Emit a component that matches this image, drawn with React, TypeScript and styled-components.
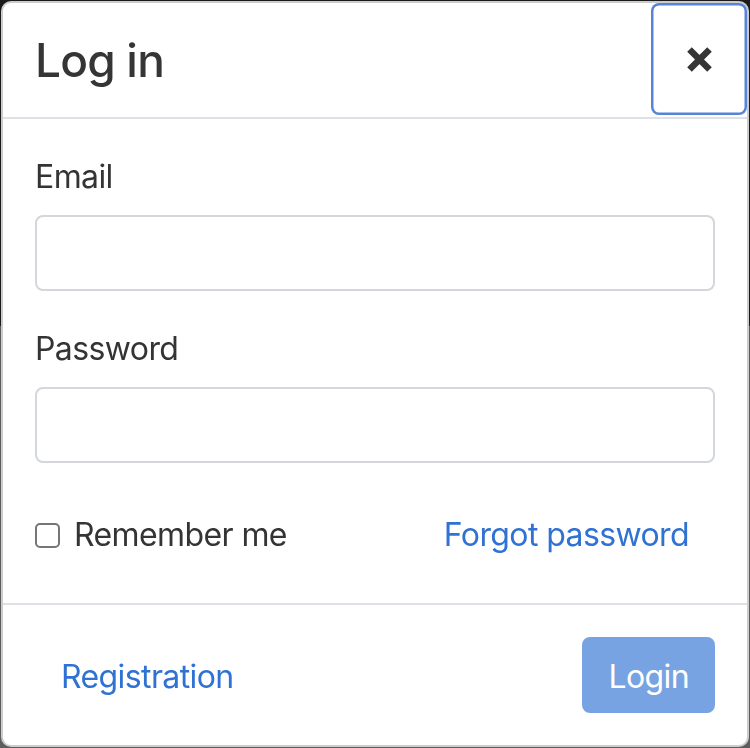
import React from "react"
import styled, { createGlobalStyle } from "styled-components"

const GlobalStyle = createGlobalStyle`
  * {
    box-sizing: border-box;
  }

  html,
  body {
    margin: 0;
    height: 100%;
  }

  body {
    font-family: Inter, "Noto Sans", sans-serif;
    background-color: #5d5d5d;
    color: #343434;
    overflow: hidden;
  }
`

const Page = styled.div`
  height: 748px;
  display: flex;
  flex-direction: column;
`

const Hero = styled.div`
  height: 326px;
  background-color: #1b1b1b;
`

const Backdrop = styled.div`
  flex: 1;
  background-color: #5d5d5d;
`

const Overlay = styled.div`
  position: fixed;
  inset: 0;
  padding: 1px;
  display: flex;
  justify-content: center;
  align-items: flex-start;
`

const Modal = styled.div`
  width: 748px;
  background-color: white;
  border: 2px solid rgba(0, 0, 0, 0.2);
  border-radius: 10px;
  display: flex;
  flex-direction: column;
`

const Header = styled.header`
  display: flex;
  align-items: flex-start;
  padding: 32px;
  border-bottom: 2px solid #dee2e6;
`

const Title = styled.h1`
  margin: 0;
  font-size: 46px;
  line-height: 50px;
  font-weight: 500;
  letter-spacing: -0.8px;
  color: #353535;
`

const CloseButton = styled.button`
  margin: -32px -32px -32px auto;
  width: 96px;
  height: 112px;
  padding: 0;
  display: flex;
  align-items: center;
  justify-content: center;
  background: none;
  border: 0;
  border-radius: 8px;
  box-shadow: inset 0 0 0 2.5px #5784d6;
  color: #353535;
  cursor: pointer;
`

const Body = styled.div`
  padding: 32px;
`

const Field = styled.div`
  margin-bottom: 32px;
`

const Label = styled.label`
  display: block;
  font-size: 32px;
  line-height: 48px;
  letter-spacing: -0.6px;
  padding-top: 2px;
  margin-bottom: 14px;
`

const Input = styled.input`
  display: block;
  width: 100%;
  height: 76px;
  padding: 12px 24px;
  border: 2px solid #d3d7db;
  border-radius: 8px;
  font: inherit;
  font-size: 32px;
  color: #343434;
  outline: none;
`

const OptionsRow = styled.div`
  display: flex;
  align-items: center;
  justify-content: space-between;
`

const Remember = styled.label`
  display: flex;
  align-items: center;
  gap: 14px;
  font-size: 32px;
  line-height: 48px;
  letter-spacing: -0.6px;
  padding-top: 4px;
`

const CheckBox = styled.input`
  appearance: none;
  width: 25px;
  height: 25px;
  margin: 0;
  border: 2px solid #767676;
  border-radius: 5px;
  background-color: white;
`

const LinkButton = styled.button`
  height: 76px;
  padding: 14px 24px 10px;
  border: 2px solid transparent;
  background: none;
  font: inherit;
  font-size: 32px;
  line-height: 48px;
  letter-spacing: -0.6px;
  color: #2f72d3;
  cursor: pointer;
`

const Footer = styled.footer`
  display: flex;
  align-items: center;
  justify-content: space-between;
  padding: 24px;
  border-top: 2px solid #dee2e6;

  & > * {
    margin: 8px;
  }
`

const PrimaryButton = styled.button`
  height: 76px;
  padding: 14px 24px 10px;
  border: 2px solid #2f72d3;
  border-radius: 8px;
  background-color: #2f72d3;
  opacity: 0.65;
  font: inherit;
  font-size: 32px;
  line-height: 48px;
  letter-spacing: -0.6px;
  color: white;
`

function CloseIcon() {
  return (
    <svg width="27" height="27" viewBox="0 0 27 27">
      <path
        d="M3.5 3.5 L23.5 23.5 M23.5 3.5 L3.5 23.5"
        stroke="currentColor"
        strokeWidth="6.5"
      />
    </svg>
  )
}

export default function App() {
  return (
    <>
      <GlobalStyle />
      <Page>
        <Hero />
        <Backdrop />
      </Page>
      <Overlay>
        <Modal>
          <Header>
            <Title>Log in</Title>
            <CloseButton aria-label="Close">
              <CloseIcon />
            </CloseButton>
          </Header>
          <Body>
            <Field>
              <Label htmlFor="email">Email</Label>
              <Input id="email" type="email" />
            </Field>
            <Field>
              <Label htmlFor="password">Password</Label>
              <Input id="password" type="password" />
            </Field>
            <OptionsRow>
              <Remember>
                <CheckBox type="checkbox" />
                Remember me
              </Remember>
              <LinkButton>Forgot password</LinkButton>
            </OptionsRow>
          </Body>
          <Footer>
            <LinkButton>Registration</LinkButton>
            <PrimaryButton disabled>Login</PrimaryButton>
          </Footer>
        </Modal>
      </Overlay>
    </>
  )
}
